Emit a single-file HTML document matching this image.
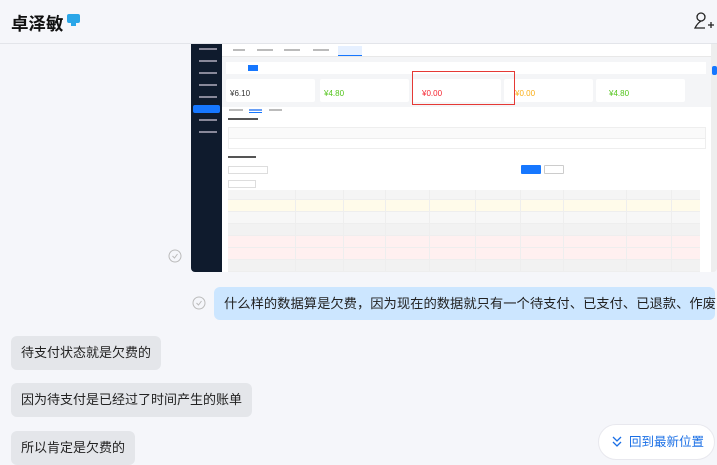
<!DOCTYPE html>
<html><head><meta charset="utf-8"><style>
*{margin:0;padding:0;box-sizing:border-box}
body{width:717px;height:462px;overflow:hidden;background:#f5f6fa;font-family:"Liberation Sans","Noto Sans CJK SC",sans-serif;position:relative}
.a{position:absolute}
.hdr{left:0;top:0;width:717px;height:44px;border-bottom:1px solid #e3e5ea;background:#f5f6fa}
.t{font-size:5px;color:#555;white-space:nowrap}
.bub{position:absolute;border-radius:6px;font-size:13px;color:#222;padding:0 10px;height:34px;line-height:34px;white-space:nowrap}
.row{position:absolute;left:228px;width:472px;height:12px;border-bottom:1px solid #eee}
.vl{position:absolute;top:190px;height:82px;width:1px;background:#eee}
.g{position:absolute;height:2px;background:#bbb}
</style></head><body>
<div class="a hdr"></div>
<div class="a" style="left:11px;top:11px;font-size:17.5px;font-weight:bold;color:#111">卓泽敏</div>
<div class="a" style="left:67px;top:14px;width:13px;height:9px;background:#2aa6e8;border-radius:2px"></div>
<div class="a" style="left:71px;top:23px;width:5px;height:3px;background:#2aa6e8"></div>
<svg class="a" style="left:693px;top:11px" width="22" height="20" viewBox="0 0 22 20"><circle cx="8" cy="6" r="4" fill="none" stroke="#222" stroke-width="1.3"/><path d="M8 10 C5 12 3 15 2 17 L12 17" fill="none" stroke="#222" stroke-width="1.3"/><path d="M15 14h6M18 11v6" stroke="#222" stroke-width="1.3"/></svg>

<div class="a" style="left:191px;top:44px;width:526px;height:228px;background:#f4f5f7;border-radius:0 0 4px 4px;overflow:hidden">
 <div class="a" style="left:0;top:0;width:31px;height:228px;background:#0f1b2d"></div>
 <div class="g" style="left:8px;top:4px;width:18px;background:#889"></div>
 <div class="g" style="left:8px;top:16px;width:18px;background:#889"></div>
 <div class="g" style="left:8px;top:28px;width:18px;background:#889"></div>
 <div class="g" style="left:8px;top:40px;width:18px;background:#889"></div>
 <div class="g" style="left:8px;top:52px;width:18px;background:#889"></div>
 <div class="a" style="left:2px;top:61px;width:27px;height:8px;background:#1677ff;border-radius:2px"></div>
 <div class="g" style="left:8px;top:75px;width:18px;background:#889"></div>
 <div class="g" style="left:8px;top:87px;width:18px;background:#889"></div>
 <div class="a" style="left:31px;top:0;width:495px;height:13px;background:#fff;border-bottom:1px solid #e8e8e8"></div>
 <div class="g" style="left:42px;top:5px;width:12px"></div><div class="g" style="left:66px;top:5px;width:16px"></div><div class="g" style="left:93px;top:5px;width:16px"></div><div class="g" style="left:122px;top:5px;width:16px"></div>
 <div class="a" style="left:147px;top:2px;width:24px;height:10px;background:#e6f0ff;border-bottom:1px solid #1677ff"></div>
 <div class="a" style="left:35px;top:18px;width:480px;height:12px;background:#fff"></div>
 <div class="a" style="left:57px;top:21px;width:10px;height:6px;background:#1677ff"></div>
 <div class="a" style="left:35px;top:35px;width:89px;height:23px;background:#fff;border-radius:2px"></div>
 <div class="a" style="left:129px;top:35px;width:89px;height:23px;background:#fff;border-radius:2px"></div>
 <div class="a" style="left:221px;top:35px;width:89px;height:23px;background:#fff;border-radius:2px"></div>
 <div class="a" style="left:313px;top:35px;width:89px;height:23px;background:#fff;border-radius:2px"></div>
 <div class="a" style="left:405px;top:35px;width:89px;height:23px;background:#fff;border-radius:2px"></div>
 <div class="a t" style="left:39px;top:45px;font-size:8px;color:#333">¥6.10</div>
 <div class="a t" style="left:133px;top:45px;font-size:8px;color:#52c41a">¥4.80</div>
 <div class="a t" style="left:231px;top:45px;font-size:8px;color:#f5222d">¥0.00</div>
 <div class="a t" style="left:324px;top:45px;font-size:8px;color:#faad14">¥0.00</div>
 <div class="a t" style="left:418px;top:45px;font-size:8px;color:#52c41a">¥4.80</div>
 <div class="a" style="left:221px;top:27px;width:103px;height:34px;border:1.5px solid #e53935"></div>
 <div class="a" style="left:31px;top:63px;width:490px;height:165px;background:#fff"></div>
 <div class="g" style="left:38px;top:65px;width:14px"></div><div class="g" style="left:58px;top:65px;width:13px;background:#6a9ff5"></div><div class="g" style="left:78px;top:65px;width:13px"></div>
 <div class="a" style="left:58px;top:68px;width:13px;height:1px;background:#1677ff"></div>
 <div class="g" style="left:37px;top:74px;width:30px;background:#555"></div>
 <div class="a" style="left:37px;top:83px;width:478px;height:22px;border:1px solid #eee;background:#fafafa"></div>
 <div class="a" style="left:37px;top:94px;width:478px;height:11px;background:#fff;border:1px solid #eee"></div>
 <div class="g" style="left:37px;top:112px;width:28px;background:#555"></div>
 <div class="a" style="left:37px;top:122px;width:40px;height:8px;border:1px solid #ddd"></div>
 <div class="a" style="left:330px;top:121px;width:20px;height:9px;background:#1677ff;border-radius:1px"></div>
 <div class="a" style="left:353px;top:121px;width:20px;height:9px;border:1px solid #ccc;border-radius:1px"></div>
 <div class="a" style="left:37px;top:136px;width:28px;height:8px;border:1px solid #ddd"></div>
 <div class="a" style="left:520px;top:0;width:6px;height:228px;background:#eee"></div>
 <div class="a" style="left:521px;top:22px;width:5px;height:9px;background:#1677ff;border-radius:2px"></div>
</div>
<div class="row" style="top:190px;height:10px;background:#f5f5f5"></div>
<div class="row" style="top:200px;background:#fffbea"></div>
<div class="row" style="top:212px;background:#f7f7f7"></div>
<div class="row" style="top:224px;background:#f2f2f2"></div>
<div class="row" style="top:236px;background:#fff0f0"></div>
<div class="row" style="top:248px;background:#fff0f0"></div>
<div class="row" style="top:260px;background:#f2f2f2"></div>
<div class="vl" style="left:295px"></div><div class="vl" style="left:343px"></div><div class="vl" style="left:385px"></div><div class="vl" style="left:429px"></div><div class="vl" style="left:475px"></div><div class="vl" style="left:520px"></div><div class="vl" style="left:563px"></div><div class="vl" style="left:626px"></div><div class="vl" style="left:671px"></div>

<svg class="a" style="left:168px;top:249px" width="14" height="14"><circle cx="7" cy="7" r="6" fill="none" stroke="#bbb"/><path d="M4.5 7l2 2 3-4" fill="none" stroke="#bbb"/></svg>
<svg class="a" style="left:192px;top:296px" width="14" height="14"><circle cx="7" cy="7" r="6" fill="none" stroke="#bbb"/><path d="M4.5 7l2 2 3-4" fill="none" stroke="#bbb"/></svg>
<div class="bub" style="left:214px;top:287px;width:501px;height:33px;line-height:33px;background:#cce6ff;padding:0 10px;font-size:13.3px;letter-spacing:0">什么样的数据算是欠费，因为现在的数据就只有一个待支付、已支付、已退款、作废</div>
<div class="bub" style="left:11px;top:336px;width:150px;background:#e4e6ea">待支付状态就是欠费的</div>
<div class="bub" style="left:11px;top:383px;width:241px;background:#e4e6ea">因为待支付是已经过了时间产生的账单</div>
<div class="bub" style="left:11px;top:431px;width:124px;background:#e4e6ea">所以肯定是欠费的</div>
<div class="a" style="left:598px;top:424px;width:117px;height:36px;background:#fff;border-radius:18px;border:1px solid #e8e8ee;color:#1a6fe6;font-size:12.5px;line-height:34px;padding-left:30px;white-space:nowrap">回到最新位置</div>
<svg class="a" style="left:612px;top:436px" width="10" height="12"><path d="M1 1l4 4 4-4M1 6l4 4 4-4" fill="none" stroke="#1a6fe6" stroke-width="1.3"/></svg>
</body></html>
